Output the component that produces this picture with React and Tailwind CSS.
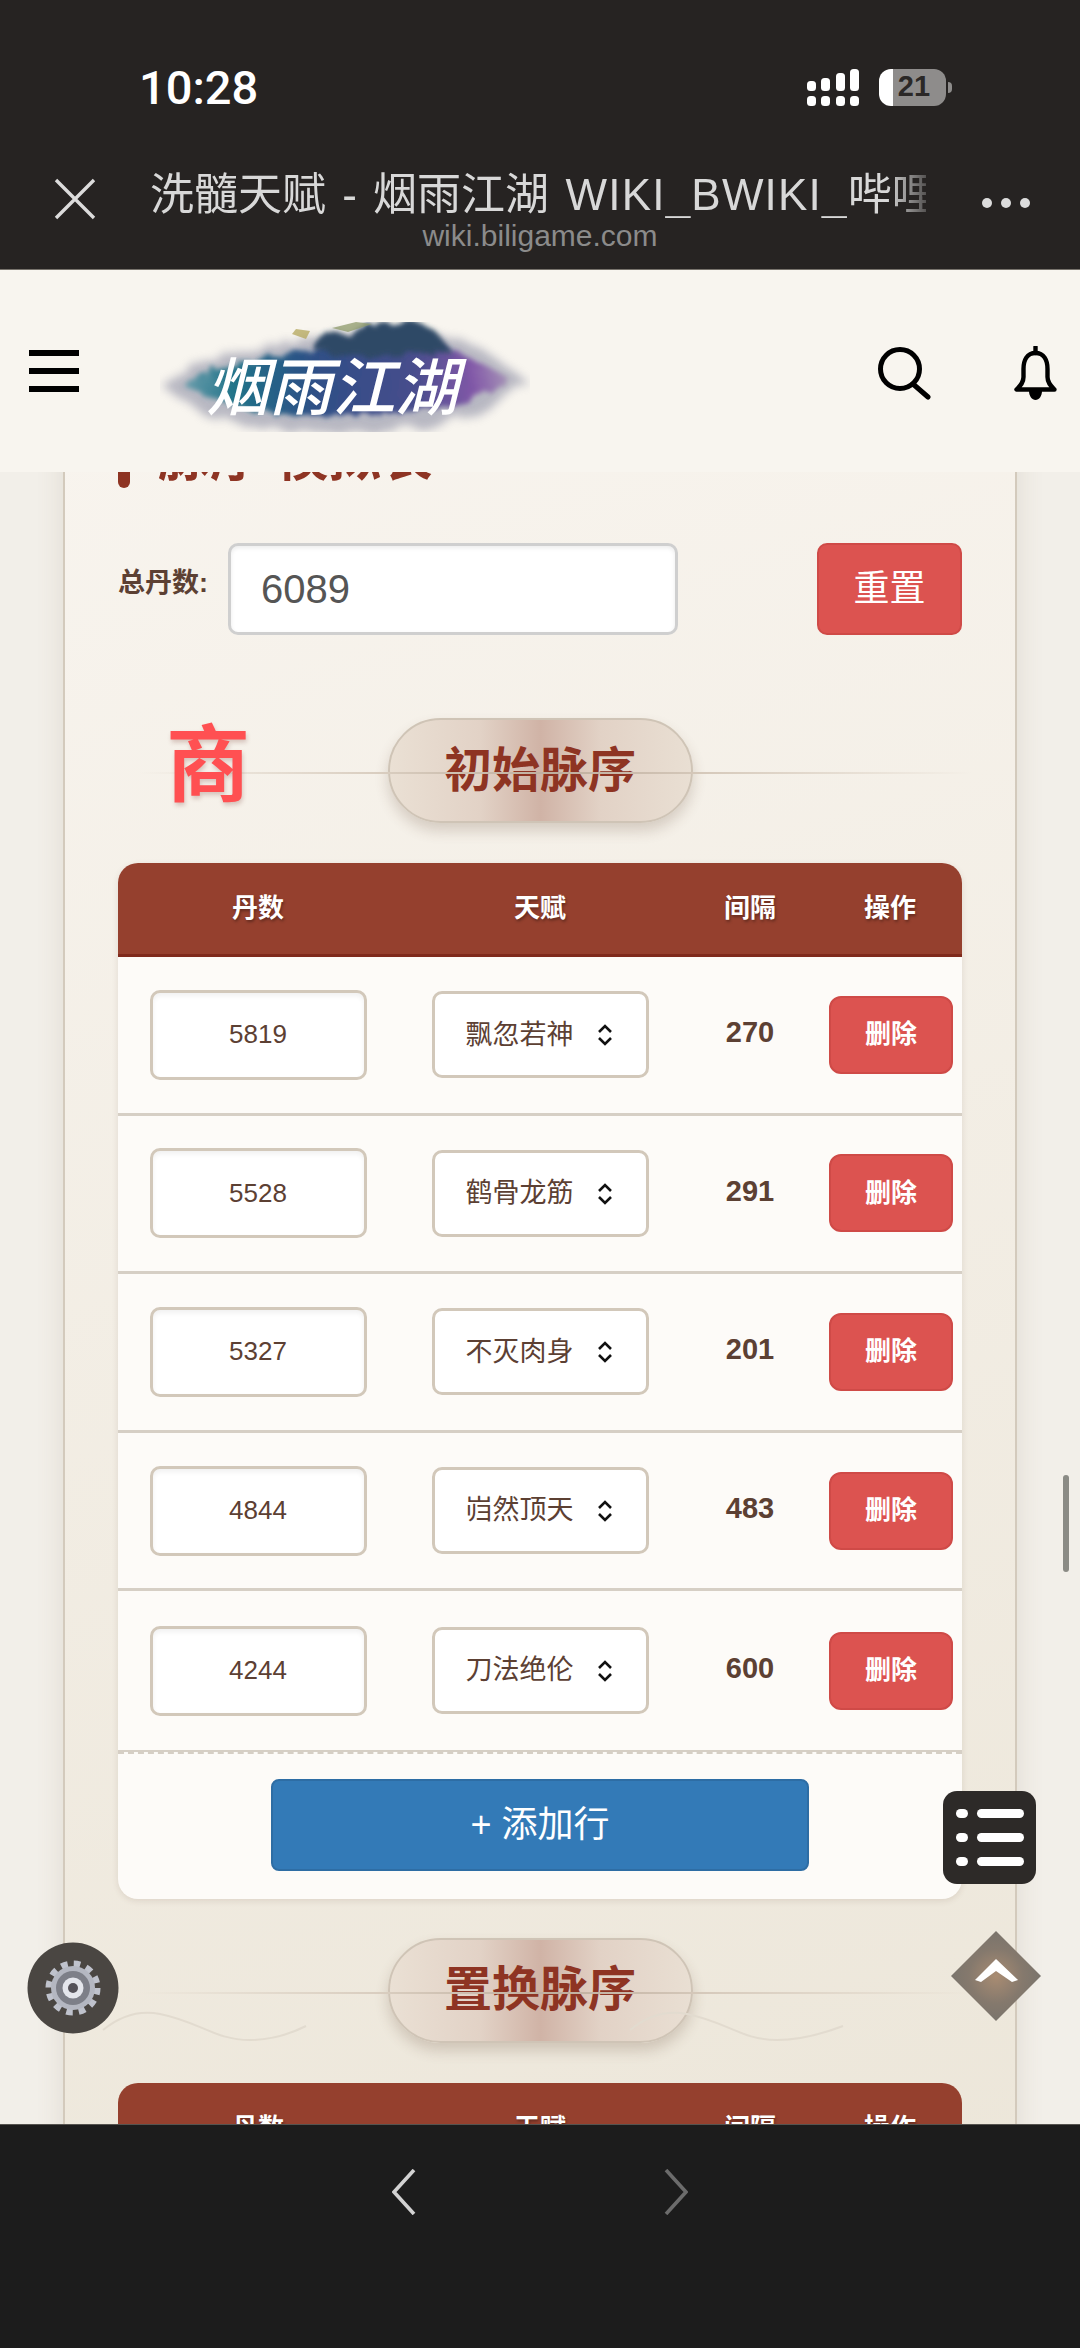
const FONT = "font-['Liberation_Sans','Noto_Sans_CJK_SC',sans-serif]";

const ROWS = [
  { dan: "5819", talent: "飘忽若神", gap: "270" },
  { dan: "5528", talent: "鹤骨龙筋", gap: "291" },
  { dan: "5327", talent: "不灭肉身", gap: "201" },
  { dan: "4844", talent: "岿然顶天", gap: "483" },
  { dan: "4244", talent: "刀法绝伦", gap: "600" },
];

function TableHead() {
  return (
    <div className="grid h-[94px] grid-cols-[280px_284px_136px_144px] items-center border-b-[3px] border-[#7f2a1c] bg-[#95402e] text-center text-[26px] font-semibold text-white [text-shadow:1px_2px_3px_rgba(0,0,0,0.35)]">
      <div>丹数</div>
      <div>天赋</div>
      <div>间隔</div>
      <div>操作</div>
    </div>
  );
}

function Row({ dan, talent, gap, last }) {
  return (
    <div className={`grid h-[158.6px] grid-cols-[280px_284px_136px_144px] items-center text-[#5c4033] ${last ? "" : "border-b-[3px] border-[#d6cfc5]"}`}>
      <div className="flex justify-center">
        <input readOnly value={dan} className="h-[90px] w-[217px] rounded-[10px] border-[3px] border-[#d2c8ba] bg-white text-center text-[26px] text-[#5c4033] shadow-[inset_0_3px_5px_rgba(0,0,0,0.06)] outline-none" />
      </div>
      <div className="flex justify-center">
        <div className="relative">
          <select defaultValue={talent} className="h-[87px] w-[217px] appearance-none rounded-[10px] border-[3px] border-[#d2c8ba] bg-white pl-[31px] text-[27px] text-[#5c4033] outline-none">
            <option>{talent}</option>
          </select>
          <svg viewBox="0 0 16 22" className="pointer-events-none absolute right-[36px] top-[33px] h-[22px] w-[16px]" fill="none" stroke="#111" strokeWidth="2.6">
            <path d="M2 8 L8 2 L14 8" />
            <path d="M2 14 L8 20 L14 14" />
          </svg>
        </div>
      </div>
      <div className="-mt-[4px] text-center text-[29px] font-bold">{gap}</div>
      <div className="flex justify-center pl-[2px]">
        <button type="button" className="h-[78px] w-[124px] rounded-[12px] border-2 border-[#cf4a47] bg-[#dc5350] text-[26px] font-semibold text-white">
          删除
        </button>
      </div>
    </div>
  );
}

function SectionTitle({ title, waves, children }) {
  return (
    <div className="relative flex h-[105px] justify-center">
      {waves && (
        <svg viewBox="0 0 950 40" className="absolute -left-[18px] top-[72px] h-[40px] w-[950px]" fill="none" stroke="#e2dbcf" strokeWidth="2">
          <path d="M3 20 C20 6 40 0 60 4 C100 12 115 30 150 30 C170 30 190 24 206 16" />
          <path d="M530 20 C547 6 567 0 587 4 C627 12 642 30 677 30 C700 30 722 24 743 16" />
        </svg>
      )}
      <div className="flex w-[305px] items-center justify-center rounded-full border-2 border-[#cfc4b6] bg-[linear-gradient(90deg,#eae0d4_0%,#e2d2c6_30%,#d0b3a6_50%,#e2d2c6_70%,#e9dfd3_100%)] text-[48px] font-bold text-[#8e3423] shadow-[0_8px_14px_rgba(90,60,40,0.2)]">
        {title}
      </div>
      <div className="absolute -right-[10px] left-[20px] top-[54px] h-[2px] bg-[linear-gradient(90deg,transparent,#d8ccbe_30%,#bfae9e_50%,#d8ccbe_70%,transparent)]" />
      {children}
    </div>
  );
}

function Logo() {
  return (
    <svg viewBox="0 0 370 110" className="ml-[81px] mt-[12px] h-[110px] w-[370px]">
      <defs>
        <filter id="ink" x="-10%" y="-20%" width="120%" height="140%">
          <feTurbulence type="fractalNoise" baseFrequency="0.07" numOctaves="3" seed="4" />
          <feDisplacementMap in="SourceGraphic" scale="14" />
          <feGaussianBlur stdDeviation="2.6" />
        </filter>
        <filter id="halo" x="-15%" y="-30%" width="130%" height="160%">
          <feTurbulence type="fractalNoise" baseFrequency="0.05" numOctaves="3" seed="9" />
          <feDisplacementMap in="SourceGraphic" scale="16" />
          <feGaussianBlur stdDeviation="5" />
        </filter>
        <linearGradient id="inkFill" x1="0" x2="1" y1="0" y2="0">
          <stop offset="0" stopColor="#6fa0ae" />
          <stop offset="0.16" stopColor="#1f7288" />
          <stop offset="0.4" stopColor="#2e4f86" />
          <stop offset="0.7" stopColor="#474d8c" />
          <stop offset="0.88" stopColor="#8258a8" />
          <stop offset="1" stopColor="#a998b8" />
        </linearGradient>
        <clipPath id="logoClip">
          <path d="M0 0 H370 V86 L330 110 H0 Z" />
        </clipPath>
      </defs>
      <g clipPath="url(#logoClip)">
        <path d="M0 62 C50 30 110 22 160 16 C210 6 280 4 320 26 C340 40 355 50 368 60 C340 76 320 100 250 106 C180 114 100 110 50 94 C30 84 14 72 0 62 Z" fill="#8d8fa4" opacity="0.6" filter="url(#halo)" />
        <path d="M22 62 C60 42 110 34 150 28 C200 16 260 14 298 30 C322 42 340 50 352 60 C326 70 296 88 240 90 C180 98 110 94 74 84 C54 78 36 70 22 62 Z" fill="url(#inkFill)" filter="url(#ink)" />
        <path d="M150 26 L165 10 L190 14 L205 2 L260 0 L280 14 L292 30 L190 36 Z" fill="#2d4a66" filter="url(#ink)" />
        <path d="M132 12 L136 7 L150 9 L146 17 Z" fill="#b3a65a" opacity="0.75" />
        <path d="M172 6 L196 0 L212 2 L188 10 Z" fill="#8d9a6a" opacity="0.75" />
      </g>
      <text x="46" y="88" fontSize="63" fontWeight="500" fontStyle="italic" fill="#fff" fontFamily="'Noto Sans CJK SC', sans-serif">烟雨江湖</text>
    </svg>
  );
}

function StatusIcons() {
  return (
    <div className="ml-auto mr-[128px] flex items-center">
      <svg viewBox="0 0 52 37" className="h-[37px] w-[52px]" fill="#fff">
        <rect x="0" y="12" width="9" height="10" rx="3.5" />
        <rect x="14" y="9" width="9" height="13" rx="3.5" />
        <rect x="29" y="4" width="9" height="18" rx="3.5" />
        <rect x="43" y="0" width="9" height="22" rx="3.5" />
        <rect x="0" y="27" width="9" height="10" rx="3.5" />
        <rect x="14" y="27" width="9" height="10" rx="3.5" />
        <rect x="29" y="27" width="9" height="10" rx="3.5" />
        <rect x="43" y="27" width="9" height="10" rx="3.5" />
      </svg>
      <div className="ml-[20px] flex h-[37px] w-[67px] items-center justify-center rounded-[12px] bg-[linear-gradient(90deg,#fff_21%,#8e8c8b_21%)] pl-[3px] text-[29px] font-bold text-[#2b2827]">
        21
      </div>
      <div className="ml-[2px] h-[11px] w-[4px] rounded-r-full bg-[#8e8c8b]" />
    </div>
  );
}

export default function App() {
  return (
    <div className={`relative flex h-[2348px] w-[1080px] flex-col overflow-hidden bg-[#f2efe9] ${FONT}`}>
      {/* browser chrome */}
      <div className="h-[270px] shrink-0 border-b border-[#77736c] bg-[#262322] pt-[60px]">
        <div className="flex h-[54px] items-center">
          <div className="ml-[139px] font-['Roboto'] text-[47px] font-medium leading-none text-white">10:28</div>
          <StatusIcons />
        </div>
        <div className="mt-[58px] flex h-[46px] items-center">
          <svg viewBox="0 0 42 42" className="ml-[54px] mt-[8px] h-[42px] w-[42px]" stroke="#dcdcdc" strokeWidth="3.4" fill="none">
            <path d="M2 2 L40 40 M40 2 L2 40" />
          </svg>
          <div className="ml-[54px] w-[776px] whitespace-nowrap text-[44px] leading-[46px] text-[#d8d8d8] [mask-image:linear-gradient(90deg,#000_95%,#0004_100%)]">
            <span className="[word-spacing:4px]">洗髓天赋 - 烟雨江湖</span>
            <span className="ml-[3px] tracking-[1.2px]"> WIKI_BWIKI_</span>
            <span>哔哩</span>
          </div>
          <div className="ml-[56px] mt-[16px] flex gap-[9px]">
            <span className="size-[10px] rounded-full bg-[#dcdcdc]" />
            <span className="size-[10px] rounded-full bg-[#dcdcdc]" />
            <span className="size-[10px] rounded-full bg-[#dcdcdc]" />
          </div>
        </div>
        <div className="h-[36px] text-center text-[30px] leading-[36px] text-[#8b8b8b]">wiki.biligame.com</div>
      </div>

      {/* site header */}
      <div className="relative z-10 flex h-[202px] shrink-0 items-center bg-[#f8f5ef]">
        <div className="ml-[29px] flex w-[50px] flex-col gap-[12px]">
          <div className="h-[6px] bg-black" />
          <div className="h-[6px] bg-black" />
          <div className="h-[6px] bg-black" />
        </div>
        <Logo />
        <svg viewBox="0 0 54 53" className="ml-[347px] mt-[4px] h-[53px] w-[54px]" fill="none" stroke="#000" strokeWidth="5" strokeLinecap="round">
          <circle cx="23" cy="22" r="19.5" />
          <path d="M36 37 L51 50" />
        </svg>
        <svg viewBox="0 0 43 54" className="ml-[83px] mt-[4px] h-[54px] w-[43px]" fill="none" stroke="#000" strokeWidth="4.4">
          <path d="M21.5 1 V7" strokeLinecap="round" />
          <path d="M21.5 7 C13 7 9.5 14 9.5 23 V31 C9.5 37 6 40 2.5 43.5 H40.5 C37 40 33.5 37 33.5 31 V23 C33.5 14 30 7 21.5 7 Z" strokeLinejoin="round" />
          <path d="M15 45 H28 C28 50 25 54 21.5 54 C18 54 15 50 15 45 Z" fill="#000" stroke="none" />
        </svg>
      </div>

      {/* scrolled page */}
      <div className="relative min-h-0 flex-1 overflow-hidden">
        <div className="mx-[63px] -mt-[44px] h-[1800px] border-x-2 border-[#d3cabc] bg-[linear-gradient(165deg,#f8f4ee,#ece6d9)] px-[53px] shadow-[0_0_26px_rgba(120,100,70,0.14)]">
          <div className="flex h-[60px] items-center text-[52px] font-bold leading-[60px] text-[#8e3423]">
            <div className="mr-[28px] h-[60px] w-[12px] rounded-full bg-[#8e3423]" />
            脉序 模拟表
          </div>

          <div className="mt-[55px] flex h-[92px] items-center">
            <div className="-mt-[12px] w-[110px] text-[27px] font-bold text-[#5c4033]">总丹数:</div>
            <input readOnly value="6089" className="h-[92px] w-[450px] rounded-[10px] border-[3px] border-[#cfcfcf] bg-white pl-[30px] text-[40px] text-[#555] shadow-[inset_0_2px_4px_rgba(0,0,0,0.08)] outline-none" />
            <button type="button" className="ml-auto h-[92px] w-[145px] rounded-[10px] border-2 border-[#cf4a47] bg-[#dc5350] text-[36px] text-white">
              重置
            </button>
          </div>

          <div className="mt-[83px]">
            <SectionTitle title="初始脉序">
              <div className="absolute left-[48px] -top-[2px] text-[84px] font-bold leading-[100px] text-[#ff5052] [text-shadow:1px_3px_4px_rgba(120,60,50,0.25)]">
                商
              </div>
            </SectionTitle>
          </div>

          <div className="mt-[40px] overflow-hidden rounded-[20px] bg-[#fdfbf8] shadow-[0_2px_6px_rgba(90,60,40,0.12)]">
            <TableHead />
            {ROWS.map((row, i) => (
              <Row key={row.dan} {...row} last={i === ROWS.length - 1} />
            ))}
            <div className="border-t-2 border-[#d6cfc5]">
              <div className="border-t-2 border-dashed border-[#d6cfc5] px-[153px] pb-[28px] pt-[25px]">
                <button type="button" className="h-[92px] w-[538px] rounded-[8px] border-2 border-[#2e6da4] bg-[#337ab7] text-[36px] text-white">
                  + 添加行
                </button>
              </div>
            </div>
          </div>

          <div className="mt-[39px]">
            <SectionTitle title="置换脉序" waves />
          </div>

          <div className="mt-[40px] overflow-hidden rounded-[20px] bg-[#fdfbf8]">
            <TableHead />
          </div>
        </div>

        {/* scrollbar */}
        <div className="absolute left-[1063px] top-[1003px] h-[97px] w-[6px] rounded-full bg-[#8b8b85]" />

        {/* floating buttons */}
        <div className="absolute left-[943px] top-[1319px] flex h-[93px] w-[93px] flex-col justify-center gap-[15px] rounded-[14px] bg-[#2d2a28] pl-[13px]">
          {[0, 1, 2].map((i) => (
            <div key={i} className="flex items-center gap-[9px]">
              <div className="h-[9px] w-[12px] rounded-full bg-white" />
              <div className="h-[9px] w-[47px] rounded-full bg-white" />
            </div>
          ))}
        </div>

        <svg viewBox="0 0 92 92" className="absolute left-[950px] top-[1458px] h-[92px] w-[92px]">
          <defs>
            <radialGradient id="diamond">
              <stop offset="0" stopColor="#a98c72" />
              <stop offset="0.6" stopColor="#85796d" />
              <stop offset="1" stopColor="#7a746c" />
            </radialGradient>
          </defs>
          <polygon points="46,1 91,46 46,91 1,46" fill="url(#diamond)" />
          <polygon points="46,29 68,50 62,52 46,41 31,52 25,50" fill="#fff" />
        </svg>

        <svg viewBox="0 0 92 92" className="absolute left-[27px] top-[1470px] h-[92px] w-[92px]">
          <circle cx="46" cy="46" r="45.5" fill="#4a4642" />
          <circle cx="46" cy="46" r="24" fill="none" stroke="#bfc2cc" strokeWidth="7" strokeDasharray="6.5 6.07" />
          <circle cx="46" cy="46" r="22" fill="#b4b7c1" />
          <circle cx="46" cy="46" r="17" fill="#7d7f88" />
          <circle cx="46" cy="46" r="10.5" fill="#e4e6ec" />
          <circle cx="46" cy="46" r="5" fill="#55535a" />
        </svg>
      </div>

      {/* browser bottom bar */}
      <div className="flex h-[224px] shrink-0 border-t border-[#55534f] bg-[#1c1c1c] pl-[392px] pt-[44px]">
        <svg viewBox="0 0 24 46" className="h-[46px] w-[24px]" fill="none" stroke="#d2d2d2" strokeWidth="3.6">
          <path d="M22 1 L2 23 L22 45" />
        </svg>
        <svg viewBox="0 0 24 46" className="ml-[248px] h-[46px] w-[24px]" fill="none" stroke="#6c6c6c" strokeWidth="3.6">
          <path d="M2 1 L22 23 L2 45" />
        </svg>
      </div>
    </div>
  );
}
